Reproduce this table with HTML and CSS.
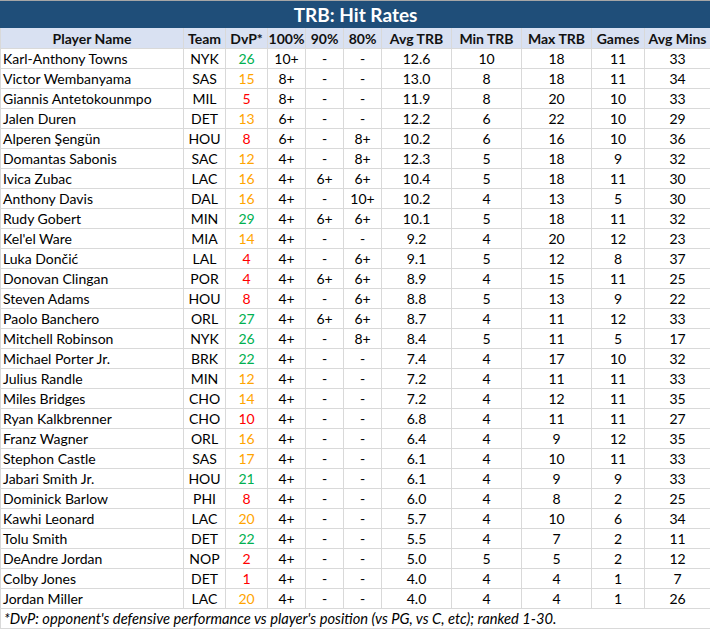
FILE: index.html
```html
<!DOCTYPE html>
<html>
<head>
<meta charset="utf-8">
<link rel="stylesheet" href="styles.css">
</head>
<body>
<table class="sheet">
<colgroup>
<col class="c-name"><col class="c-team"><col class="c-dvp"><col class="c-pct"><col class="c-pct"><col class="c-pct"><col class="c-stat"><col class="c-stat"><col class="c-stat"><col class="c-games"><col class="c-mins">
</colgroup>
<thead>
<tr class="title-row"><th colspan="11">TRB: Hit Rates</th></tr>
<tr class="head-row"><th>Player Name</th><th>Team</th><th>DvP*</th><th>100%</th><th>90%</th><th>80%</th><th>Avg TRB</th><th>Min TRB</th><th>Max TRB</th><th>Games</th><th>Avg Mins</th></tr>
</thead>
<tbody>
<tr><td class="name">Karl-Anthony Towns</td><td>NYK</td><td class="hi">26</td><td>10+</td><td>-</td><td>-</td><td>12.6</td><td>10</td><td>18</td><td>11</td><td>33</td></tr>
<tr><td class="name">Victor Wembanyama</td><td>SAS</td><td class="mid">15</td><td>8+</td><td>-</td><td>-</td><td>13.0</td><td>8</td><td>18</td><td>11</td><td>34</td></tr>
<tr><td class="name">Giannis Antetokounmpo</td><td>MIL</td><td class="lo">5</td><td>8+</td><td>-</td><td>-</td><td>11.9</td><td>8</td><td>20</td><td>10</td><td>33</td></tr>
<tr><td class="name">Jalen Duren</td><td>DET</td><td class="mid">13</td><td>6+</td><td>-</td><td>-</td><td>12.2</td><td>6</td><td>22</td><td>10</td><td>29</td></tr>
<tr><td class="name">Alperen Şengün</td><td>HOU</td><td class="lo">8</td><td>6+</td><td>-</td><td>8+</td><td>10.2</td><td>6</td><td>16</td><td>10</td><td>36</td></tr>
<tr><td class="name">Domantas Sabonis</td><td>SAC</td><td class="mid">12</td><td>4+</td><td>-</td><td>8+</td><td>12.3</td><td>5</td><td>18</td><td>9</td><td>32</td></tr>
<tr><td class="name">Ivica Zubac</td><td>LAC</td><td class="mid">16</td><td>4+</td><td>6+</td><td>6+</td><td>10.4</td><td>5</td><td>18</td><td>11</td><td>30</td></tr>
<tr><td class="name">Anthony Davis</td><td>DAL</td><td class="mid">16</td><td>4+</td><td>-</td><td>10+</td><td>10.2</td><td>4</td><td>13</td><td>5</td><td>30</td></tr>
<tr><td class="name">Rudy Gobert</td><td>MIN</td><td class="hi">29</td><td>4+</td><td>6+</td><td>6+</td><td>10.1</td><td>5</td><td>18</td><td>11</td><td>32</td></tr>
<tr><td class="name">Kel'el Ware</td><td>MIA</td><td class="mid">14</td><td>4+</td><td>-</td><td>-</td><td>9.2</td><td>4</td><td>20</td><td>12</td><td>23</td></tr>
<tr><td class="name">Luka Dončić</td><td>LAL</td><td class="lo">4</td><td>4+</td><td>-</td><td>6+</td><td>9.1</td><td>5</td><td>12</td><td>8</td><td>37</td></tr>
<tr><td class="name">Donovan Clingan</td><td>POR</td><td class="lo">4</td><td>4+</td><td>6+</td><td>6+</td><td>8.9</td><td>4</td><td>15</td><td>11</td><td>25</td></tr>
<tr><td class="name">Steven Adams</td><td>HOU</td><td class="lo">8</td><td>4+</td><td>-</td><td>6+</td><td>8.8</td><td>5</td><td>13</td><td>9</td><td>22</td></tr>
<tr><td class="name">Paolo Banchero</td><td>ORL</td><td class="hi">27</td><td>4+</td><td>6+</td><td>6+</td><td>8.7</td><td>4</td><td>11</td><td>12</td><td>33</td></tr>
<tr><td class="name">Mitchell Robinson</td><td>NYK</td><td class="hi">26</td><td>4+</td><td>-</td><td>8+</td><td>8.4</td><td>5</td><td>11</td><td>5</td><td>17</td></tr>
<tr><td class="name">Michael Porter Jr.</td><td>BRK</td><td class="hi">22</td><td>4+</td><td>-</td><td>-</td><td>7.4</td><td>4</td><td>17</td><td>10</td><td>32</td></tr>
<tr><td class="name">Julius Randle</td><td>MIN</td><td class="mid">12</td><td>4+</td><td>-</td><td>-</td><td>7.2</td><td>4</td><td>11</td><td>11</td><td>33</td></tr>
<tr><td class="name">Miles Bridges</td><td>CHO</td><td class="mid">14</td><td>4+</td><td>-</td><td>-</td><td>7.2</td><td>4</td><td>12</td><td>11</td><td>35</td></tr>
<tr><td class="name">Ryan Kalkbrenner</td><td>CHO</td><td class="lo">10</td><td>4+</td><td>-</td><td>-</td><td>6.8</td><td>4</td><td>11</td><td>11</td><td>27</td></tr>
<tr><td class="name">Franz Wagner</td><td>ORL</td><td class="mid">16</td><td>4+</td><td>-</td><td>-</td><td>6.4</td><td>4</td><td>9</td><td>12</td><td>35</td></tr>
<tr><td class="name">Stephon Castle</td><td>SAS</td><td class="mid">17</td><td>4+</td><td>-</td><td>-</td><td>6.1</td><td>4</td><td>10</td><td>11</td><td>33</td></tr>
<tr><td class="name">Jabari Smith Jr.</td><td>HOU</td><td class="hi">21</td><td>4+</td><td>-</td><td>-</td><td>6.1</td><td>4</td><td>9</td><td>9</td><td>33</td></tr>
<tr><td class="name">Dominick Barlow</td><td>PHI</td><td class="lo">8</td><td>4+</td><td>-</td><td>-</td><td>6.0</td><td>4</td><td>8</td><td>2</td><td>25</td></tr>
<tr><td class="name">Kawhi Leonard</td><td>LAC</td><td class="mid">20</td><td>4+</td><td>-</td><td>-</td><td>5.7</td><td>4</td><td>10</td><td>6</td><td>34</td></tr>
<tr><td class="name">Tolu Smith</td><td>DET</td><td class="hi">22</td><td>4+</td><td>-</td><td>-</td><td>5.5</td><td>4</td><td>7</td><td>2</td><td>11</td></tr>
<tr><td class="name">DeAndre Jordan</td><td>NOP</td><td class="lo">2</td><td>4+</td><td>-</td><td>-</td><td>5.0</td><td>5</td><td>5</td><td>2</td><td>12</td></tr>
<tr><td class="name">Colby Jones</td><td>DET</td><td class="lo">1</td><td>4+</td><td>-</td><td>-</td><td>4.0</td><td>4</td><td>4</td><td>1</td><td>7</td></tr>
<tr><td class="name">Jordan Miller</td><td>LAC</td><td class="mid">20</td><td>4+</td><td>-</td><td>-</td><td>4.0</td><td>4</td><td>4</td><td>1</td><td>26</td></tr>
</tbody>
<tfoot>
<tr class="foot-row"><td colspan="11">*DvP: opponent's defensive performance vs player's position (vs PG, vs C, etc); ranked 1-30.</td></tr>
</tfoot>
</table>
</body>
</html>
```
FILE: styles.css
```css
html, body {
  margin: 0;
  padding: 0;
  background: #ffffff;
}
.sheet {
  width: 710px;
  border-collapse: collapse;
  table-layout: fixed;
  font-family: Lato, "Open Sans", sans-serif;
  font-size: 14px;
  color: #000000;
}
.c-name { width: 183px; }
.c-team { width: 42px; }
.c-dvp { width: 42px; }
.c-pct { width: 38px; }
.c-stat { width: 70px; }
.c-games { width: 53px; }
.c-mins { width: 66px; }

.sheet td, .sheet th {
  border: 1px solid #d9d9d9;
  padding: 0;
  text-align: center;
  white-space: nowrap;
  overflow: hidden;
}
.title-row th {
  background: #1f4e79;
  color: #ffffff;
  font-size: 19px;
  font-weight: 700;
  height: 26px;
  line-height: 25px;
  border-color: #1f4e79;
  border-top: 1px solid #a6a6a6;
}
.head-row th {
  background: #d9e1f2;
  font-weight: 700;
  height: 20px;
  line-height: 19px;
  color: #111111;
}
.sheet tbody td {
  height: 19px;
  line-height: 18px;
}
.sheet tbody td.name {
  text-align: left;
  padding-left: 2px;
}
.hi { color: #00b050; }
.mid { color: #ffa400; }
.lo { color: #ff0000; }
.foot-row td {
  text-align: left;
  font-style: italic;
  font-size: 14.7px;
  padding-left: 3px;
  height: 19px;
  line-height: 17px;
}
```
